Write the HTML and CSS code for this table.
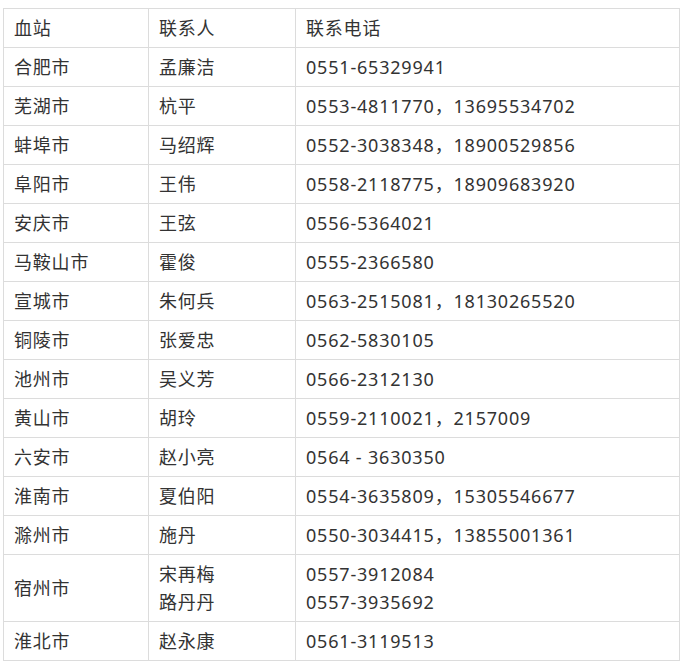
FILE: index.html
```html
<!DOCTYPE html>
<html lang="zh">
<head>
<meta charset="utf-8">
<link rel="stylesheet" href="styles.css">
</head>
<body>
<table class="contacts">
  <colgroup><col class="c1"><col class="c2"><col class="c3"></colgroup>
  <tr><td>血站</td><td>联系人</td><td>联系电话</td></tr>
  <tr><td>合肥市</td><td>孟廉洁</td><td>0551-65329941</td></tr>
  <tr><td>芜湖市</td><td>杭平</td><td>0553-4811770，13695534702</td></tr>
  <tr><td>蚌埠市</td><td>马绍辉</td><td>0552-3038348，18900529856</td></tr>
  <tr><td>阜阳市</td><td>王伟</td><td>0558-2118775，18909683920</td></tr>
  <tr><td>安庆市</td><td>王弦</td><td>0556-5364021</td></tr>
  <tr><td>马鞍山市</td><td>霍俊</td><td>0555-2366580</td></tr>
  <tr><td>宣城市</td><td>朱何兵</td><td>0563-2515081，18130265520</td></tr>
  <tr><td>铜陵市</td><td>张爱忠</td><td>0562-5830105</td></tr>
  <tr><td>池州市</td><td>吴义芳</td><td>0566-2312130</td></tr>
  <tr><td>黄山市</td><td>胡玲</td><td>0559-2110021，2157009</td></tr>
  <tr><td>六安市</td><td>赵小亮</td><td>0564 - 3630350</td></tr>
  <tr><td>淮南市</td><td>夏伯阳</td><td>0554-3635809，15305546677</td></tr>
  <tr><td>滁州市</td><td>施丹</td><td>0550-3034415，13855001361</td></tr>
  <tr class="double"><td>宿州市</td><td>宋再梅<br>路丹丹</td><td>0557-3912084<br>0557-3935692</td></tr>
  <tr><td>淮北市</td><td>赵永康</td><td>0561-3119513</td></tr>
</table>
</body>
</html>
```
FILE: styles.css
```css
html, body {
  margin: 0;
  padding: 0;
  background: #fff;
}
body {
  padding: 8px 0 0 3px;
}
.contacts {
  border-collapse: collapse;
  table-layout: fixed;
  width: 676px;
  font-family: "Noto Sans", "Noto Sans CJK SC", sans-serif;
  font-size: 18px;
  letter-spacing: 0.8px;
  color: #333;
}
.c1 { width: 145px; }
.c2 { width: 147px; }
.c3 { width: 384px; }
.contacts td {
  border: 1px solid #dcdcdc;
  height: 39px;
  padding: 0 10px;
  box-sizing: border-box;
  line-height: 28px;
  vertical-align: middle;
  white-space: nowrap;
}
.contacts tr.double td {
  height: 67px;
}
```
